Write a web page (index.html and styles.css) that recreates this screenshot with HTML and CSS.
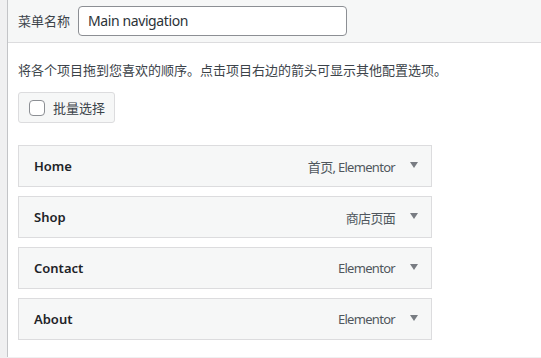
FILE: index.html
```html
<!DOCTYPE html>
<html lang="zh-CN">
<head>
  <meta charset="UTF-8" />
  <meta name="viewport" content="width=device-width, initial-scale=1.0"/>
  <title>菜单</title>
  <link rel="stylesheet" href="styles.css">
</head>
<body>
  <div class="frame">
    <div class="menu-header">
      <label class="menu-name-label" for="menuName">菜单名称</label>
      <input type="text" id="menuName" class="menu-name" value="Main navigation" />
    </div>

    <div class="menu-body">
      <p class="drag-hint">将各个项目拖到您喜欢的顺序。点击项目右边的箭头可显示其他配置选项。</p>

      <label class="bulk-select">
        <span class="checkbox"></span>
        <span>批量选择</span>
      </label>

      <!-- Menu items -->
      <ul class="menu-items">
        <li class="menu-item">
          <span class="item-title">Home</span>
          <span class="item-type">首页, Elementor</span>
          <span class="item-arrow"></span>
        </li>
        <li class="menu-item">
          <span class="item-title">Shop</span>
          <span class="item-type">商店页面</span>
          <span class="item-arrow"></span>
        </li>
        <li class="menu-item">
          <span class="item-title">Contact</span>
          <span class="item-type">Elementor</span>
          <span class="item-arrow"></span>
        </li>
        <li class="menu-item">
          <span class="item-title">About</span>
          <span class="item-type">Elementor</span>
          <span class="item-arrow"></span>
        </li>
      </ul>
    </div>
  </div>
</body>
</html>
```

FILE: styles.css
```css
body {
  margin: 0;
  background: #f0f0f1;
  font-family: "Noto Sans", "Noto Sans CJK SC", sans-serif;
  font-size: 13px;
  color: #3c434a;
}

.frame {
  margin-left: 7px;
  border-left: 1px solid #c3c4c7;
  background: #fff;
  min-height: 100vh;
}

.menu-header {
  display: flex;
  align-items: center;
  gap: 8px;
  height: 43px;
  padding: 0 10px;
  background: #f6f7f7;
  border-bottom: 1px solid #dcdcde;
  box-sizing: content-box;
  margin-top: -1px;
}

.menu-name-label {
  color: #3c434a;
}

.menu-name {
  width: 269px;
  height: 30px;
  box-sizing: border-box;
  padding: 0 9px;
  border: 1px solid #8c8f94;
  border-radius: 4px;
  font-family: inherit;
  font-size: 14px;
  letter-spacing: -0.4px;
  color: #2c3338;
  background: #fff;
}

.menu-body {
  padding: 0 10px;
}

.drag-hint {
  margin: 0;
  padding-top: 18px;
  line-height: 18px;
}

.bulk-select {
  display: inline-flex;
  align-items: center;
  gap: 8px;
  margin-top: 13px;
  height: 31px;
  box-sizing: border-box;
  padding: 0 9px 0 10px;
  border: 1px solid #dcdcde;
  border-radius: 3px;
  background: #f6f7f7;
  color: #3c434a;
}

.checkbox {
  width: 16px;
  height: 16px;
  box-sizing: border-box;
  border: 1px solid #8c8f94;
  border-radius: 4px;
  background: #fff;
}

.menu-items {
  list-style: none;
  margin: 22px 0 0;
  padding: 0;
  width: 414px;
  display: flex;
  flex-direction: column;
  gap: 9px;
}

.menu-item {
  display: flex;
  align-items: center;
  height: 42px;
  box-sizing: border-box;
  padding: 0 13px 0 15px;
  border: 1px solid #dcdcde;
  background: #f6f7f7;
}

.item-title {
  flex: 1;
  font-weight: 600;
  color: #1d2327;
}

.item-type {
  color: #50575e;
  letter-spacing: -0.7px;
  margin-right: 15px;
}

.item-arrow {
  width: 0;
  height: 0;
  border-left: 4px solid transparent;
  border-right: 4px solid transparent;
  border-top: 6px solid #787c82;
  margin-top: -2px;
}
```
